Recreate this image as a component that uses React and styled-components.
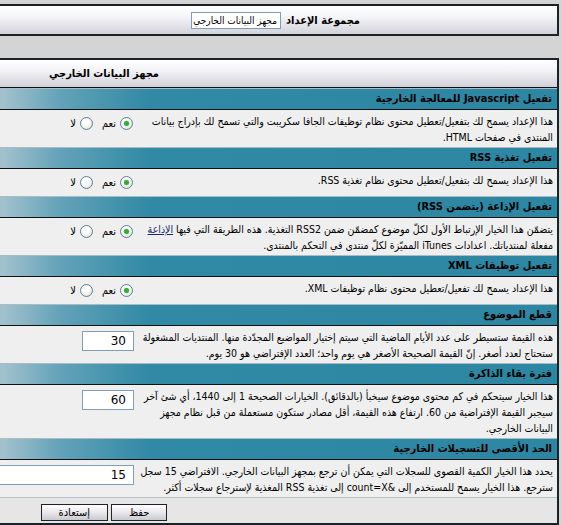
import React from "react";
import styled, { createGlobalStyle } from "styled-components";

const GlobalStyle = createGlobalStyle`
  html, body {
    margin: 0;
    padding: 0;
    background: #d4d4d4;
  }
  body {
    font-family: "DejaVu Sans Condensed", "DejaVu Sans", sans-serif;
    color: #000;
  }
`;

// page is wider than the window, rtl so it overflows to the left
const Viewport = styled.div`
  direction: rtl;
  overflow: hidden;
  height: 525px;
  box-sizing: border-box;
  padding: 4px 2px 0 0;
`;

const Panel = styled.div`
  width: 910px;
  box-sizing: border-box;
  border: 2px solid #1b2329;
  background: #efefef;
  margin-bottom: ${(p) => p.$gap || 0}px;
`;

const GroupBar = styled.div`
  display: flex;
  align-items: center;
  gap: 5px;
  height: 28px;
  padding-right: 197px;
  background: linear-gradient(#ffffff 0%, #f4f4f7 40%, #d2d2da 100%);
`;

const GroupLabel = styled.span`
  font-size: 11px;
  font-weight: bold;
`;

const GroupSelect = styled.div`
  width: 90px;
  height: 17px;
  box-sizing: border-box;
  border: 1px solid #7f9db9;
  background: #fff;
  font-size: 10px;
  line-height: 15px;
  padding: 0 3px;
  white-space: nowrap;
  overflow: hidden;
`;

const TitleBar = styled.div`
  height: 27px;
  line-height: 27px;
  border-bottom: 1px solid #111;
  text-align: center;
  font-size: 11px;
  font-weight: bold;
  background: linear-gradient(#ffffff 0%, #f3f3f6 40%, #d0d0d8 100%);
`;

const SectionHeader = styled.div`
  height: 20px;
  line-height: 20px;
  padding: 0 5px;
  border-top: 1px solid #a9bcc4;
  border-bottom: 1px solid #111;
  font-size: 11px;
  font-weight: bold;
  white-space: nowrap;
  background: linear-gradient(
    90deg,
    #2f88a4 0,
    #2f88a4 300px,
    #a3c2ce 351px,
    #62a2b8 410px,
    #3089a5 500px,
    #2d86a2 100%
  );
`;

const OptionRow = styled.div`
  display: grid;
  grid-template-columns: 422px 1fr;
  background: #efefef;
`;

const Description = styled.div`
  padding: 3px 4px 2px 2px;
  font-size: 10.5px;
  line-height: 16px;
`;

const Control = styled.div`
  display: flex;
  align-items: flex-start;
  padding: ${(p) => (p.$radio ? "7px 2px 7px 0" : "5px 1px 0 0")};
`;

const Choice = styled.label`
  display: flex;
  align-items: center;
  gap: 4px;
  height: 13px;
  font-size: 11px;
  margin-left: 9px;
`;

const Radio = styled.input.attrs({ type: "radio" })`
  appearance: none;
  margin: 0;
  width: 13px;
  height: 13px;
  box-sizing: border-box;
  border: 1px solid #5f7f98;
  border-radius: 50%;
  background: radial-gradient(circle at 40% 35%, #ffffff 30%, #d6d6d0 100%);
  &:checked {
    background: radial-gradient(circle, #2fae2f 0 2px, #7fd07f 2.6px, transparent 3.2px),
      radial-gradient(circle at 40% 35%, #ffffff 30%, #d6d6d0 100%);
  }
`;

const TextInput = styled.input.attrs({ type: "text" })`
  width: ${(p) => p.$width}px;
  height: 20px;
  box-sizing: border-box;
  margin: 0;
  padding: 0 7px;
  border: 1px solid #7f9db9;
  background: #fff;
  font-family: "DejaVu Sans", sans-serif;
  font-size: 12px;
  direction: rtl;
  outline: none;
`;

const Link = styled.a`
  color: #1b2a6e;
  text-decoration: underline;
`;

const Footer = styled.div`
  display: flex;
  justify-content: center;
  gap: 3px;
  padding: 6px 0 2px;
  border-top: 1px solid #b9c4c9;
  background: #e6e6e6;
`;

const Button = styled.button`
  height: 17px;
  padding: 0 17px;
  border: 1px solid #222;
  background: linear-gradient(#ffffff, #e8e8ec 50%, #c9c9d1);
  font-family: "DejaVu Sans Condensed", "DejaVu Sans", sans-serif;
  font-size: 11px;
  line-height: 14px;
  color: #000;
`;

const options = [
  {
    title: "تفعيل Javascript للمعالجة الخارجية",
    text: "هذا الإعداد يسمح لك بتفعيل/تعطيل محتوى نظام توظيفات الجافا سكريبت والتي تسمح لك بإدراج بيانات المنتدى في صفحات HTML.",
    control: { type: "yesno" },
  },
  {
    title: "تفعيل تغذية RSS",
    text: "هذا الإعداد يسمح لك بتفعيل/تعطيل محتوى نظام تغذية RSS.",
    control: { type: "yesno" },
  },
  {
    title: "تفعيل الإذاعة (يتضمن RSS)",
    text: (
      <>
        يتضمّن هذا الخيار الإرتباط الأول لكلّ موضوع كمضمّن ضمن RSS2 التغذية. هذه الطريقة التي فيها{" "}
        <Link href="#">الإذاعة</Link> مفعلة لمنتدياتك. اعدادات iTunes المميّزة لكلّ منتدى في التحكم بالمنتدى.
      </>
    ),
    control: { type: "yesno" },
  },
  {
    title: "تفعيل توظيفات XML",
    text: "هذا الإعداد يسمح لك تفعيل/تعطيل محتوى نظام توظيفات XML.",
    control: { type: "yesno" },
  },
  {
    title: "قطع الموضوع",
    text: "هذه القيمة ستسيطر على عدد الأيام الماضية التي سيتم إختيار المواضيع المجدّدة منها. المنتديات المشغولة ستحتاج لعدد أصغر. إنّ القيمة الصحيحة الأصغر هي يوم واحد؛ العدد الإفتراضي هو 30 يوم.",
    control: { type: "text", value: "30", width: 52 },
  },
  {
    title: "فترة بقاء الذاكرة",
    text: "هذا الخيار سيتحكم في كم محتوى موضوع سيخبأ (بالدقائق). الخيارات الصحيحة 1 إلى 1440، أي شئ آخر سيجبر القيمة الإفتراضية من 60. ارتفاع هذه القيمة، أقل مصادر ستكون مستعملة من قبل نظام مجهز البيانات الخارجي.",
    control: { type: "text", value: "60", width: 52 },
  },
  {
    title: "الحد الأقصى للتسجيلات الخارجية",
    text: "يحدد هذا الخيار الكمية القصوى للسجلات التي يمكن أن ترجع بمجهز البيانات الخارجي. الافتراضي 15 سجل سترجع. هذا الخيار يسمح للمستخدم إلى &count=X إلى تغذية RSS المغذية لإسترجاع سجلات أكثر.",
    control: { type: "text", value: "15", width: 300 },
  },
];

function OptionControl({ control, name }) {
  if (control.type === "yesno") {
    return (
      <Control $radio>
        <Choice>
          <Radio name={name} defaultChecked />
          نعم
        </Choice>
        <Choice>
          <Radio name={name} />
          لا
        </Choice>
      </Control>
    );
  }
  return (
    <Control>
      <TextInput $width={control.width} defaultValue={control.value} />
    </Control>
  );
}

export default function App() {
  return (
    <>
      <GlobalStyle />
      <Viewport>
        <Panel $gap={22}>
          <GroupBar>
            <GroupLabel>مجموعة الإعداد</GroupLabel>
            <GroupSelect>مجهز البيانات الخارجي</GroupSelect>
          </GroupBar>
        </Panel>
        <Panel>
          <TitleBar>مجهز البيانات الخارجي</TitleBar>
          {options.map((opt, i) => (
            <React.Fragment key={i}>
              <SectionHeader>{opt.title}</SectionHeader>
              <OptionRow>
                <Description>{opt.text}</Description>
                <OptionControl control={opt.control} name={`opt${i}`} />
              </OptionRow>
            </React.Fragment>
          ))}
          <Footer>
            <Button type="button">حفظ</Button>
            <Button type="button">إستعادة</Button>
          </Footer>
        </Panel>
      </Viewport>
    </>
  );
}
